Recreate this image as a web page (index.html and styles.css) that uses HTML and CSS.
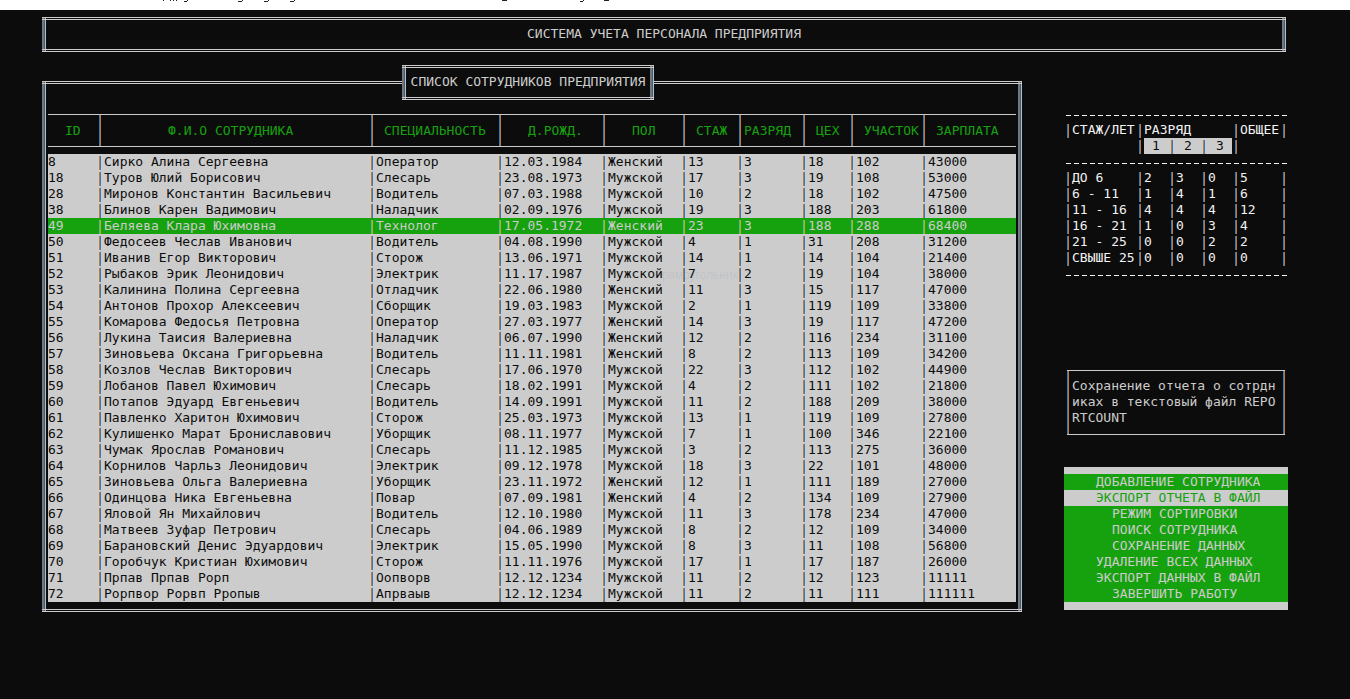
FILE: index.html
```html
<!DOCTYPE html>
<html lang="ru">
<head>
<meta charset="utf-8">
<title>Система учета персонала предприятия</title>
<link rel="stylesheet" href="styles.css">
</head>
<body>
<div class="strip" aria-hidden="true">
  <svg width="640" height="3" viewBox="0 0 640 3" shape-rendering="crispEdges" fill="none" stroke="#222222">
    <path d="M163 0v1M170 0v1M173 0v1M176 0v1M187 0v1M184 1.5h3M242 0v1M238 1.5h4M268 0v1M264 1.5h4M294 0v1M290 1.5h4M502 0.5h5M583 0v1M580 1.5h3M604 0.5h5"/>
  </svg>
</div>
<div class="screen">
  <header class="frame banner"><h1>СИСТЕМА УЧЕТА ПЕРСОНАЛА ПРЕДПРИЯТИЯ</h1></header>
  <div class="columns">
    <main class="frame panel">
      <h2 class="frame panel-title">СПИСОК СОТРУДНИКОВ ПРЕДПРИЯТИЯ</h2>
      <table class="staff">
        <colgroup><col class="c-id"><col class="c-name"><col class="c-job"><col class="c-date"><col class="c-sex"><col class="c-exp"><col class="c-rank"><col class="c-shop"><col class="c-area"><col></colgroup>
        <thead><tr><th class="h-id">ID</th><th class="h-name">Ф.И.О СОТРУДНИКА</th><th>СПЕЦИАЛЬНОСТЬ</th><th class="h-mid">Д.РОЖД.</th><th class="h-mid">ПОЛ</th><th>СТАЖ</th><th class="h-rank">РАЗРЯД</th><th>ЦЕХ</th><th>УЧАСТОК</th><th>ЗАРПЛАТА</th></tr></thead>
        <tbody id="rows"></tbody>
      </table>
      <span class="ghost">Прямоугольник</span>
    </main>
    <aside class="side">
      <table class="stats">
        <colgroup><col class="s-range"><col class="s-n"><col class="s-n"><col class="s-n"><col></colgroup>
        <thead>
          <tr><th>СТАЖ/ЛЕТ</th><th colspan="3">РАЗРЯД</th><th>ОБЩЕЕ</th></tr>
          <tr class="ranks"><th></th><th class="r-first">1</th><th class="r-mid">2</th><th class="r-last">3</th><th></th></tr>
        </thead>
        <tbody>
          <tr><td>ДО 6</td><td>2</td><td>3</td><td>0</td><td>5</td></tr>
          <tr><td>6 - 11</td><td>1</td><td>4</td><td>1</td><td>6</td></tr>
          <tr><td>11 - 16</td><td>4</td><td>4</td><td>4</td><td>12</td></tr>
          <tr><td>16 - 21</td><td>1</td><td>0</td><td>3</td><td>4</td></tr>
          <tr><td>21 - 25</td><td>0</td><td>0</td><td>2</td><td>2</td></tr>
          <tr><td>СВЫШЕ 25</td><td>0</td><td>0</td><td>0</td><td>0</td></tr>
        </tbody>
      </table>
      <p class="hint">Сохранение отчета о сотрдниках в текстовый файл REPORTCOUNT</p>
      <nav class="menu">
        <button type="button">ДОБАВЛЕНИЕ СОТРУДНИКА</button>
        <button type="button" class="active">ЭКСПОРТ ОТЧЕТА В ФАЙЛ</button>
        <button type="button" class="inset">РЕЖИМ СОРТИРОВКИ</button>
        <button type="button" class="inset">ПОИСК СОТРУДНИКА</button>
        <button type="button" class="inset">СОХРАНЕНИЕ ДАННЫХ</button>
        <button type="button">УДАЛЕНИЕ ВСЕХ ДАННЫХ</button>
        <button type="button">ЭКСПОРТ ДАННЫХ В ФАЙЛ</button>
        <button type="button" class="inset">ЗАВЕРШИТЬ РАБОТУ</button>
      </nav>
    </aside>
  </div>
</div>
<script src="staff.js"></script>
</body>
</html>
```

FILE: styles.css
```css
* { box-sizing: border-box; }

:root {
  --ink: #0c0c0c;
  --grey: #cccccc;
  --green: #16a10e;
  --rule-dark: linear-gradient(90deg, #3a78b0 50%, #c07a3a 50%);
  --rule-grey: linear-gradient(90deg, #b0804a 50%, #3a78b8 50%);
  --rule-green: linear-gradient(90deg, #60b890 50%, #b0b030 50%);
  --edge: linear-gradient(90deg, #3a86c8 25%, #a8683a 25% 50%, #1f66a8 50% 75%, #d8b894 75%);
}

body {
  margin: 0;
  min-height: 100vh;
  background: var(--ink);
  color: var(--grey);
  font: 13px/16px "DejaVu Sans Mono", monospace;
}

h1, h2, p { margin: 0; font: inherit; }

.strip { height: 10px; background: #ffffff; }
.strip svg { display: block; }

.screen { padding: 7px 62px 0 42px; }

/* Double-line console frame */
.frame {
  border: 0 double var(--grey);
  border-width: 3px 0;
  background-color: var(--ink);
  background-image: var(--edge), var(--edge);
  background-origin: border-box;
  background-position: 0 0, 100% 0;
  background-size: 4px 100%;
  background-repeat: no-repeat;
}

.banner {
  margin-right: 2px;
  padding: 6px 6px 7px;
  text-align: center;
}

.columns {
  display: flex;
  gap: 42px;
  align-items: flex-start;
  margin-top: 29px;
}

.panel {
  position: relative;
  flex: 1;
  padding: 30px 6px 7px;
}

.panel-title {
  position: absolute;
  top: -19px;
  left: 360px;
  min-width: 252px;
  padding: 6px 6px 7px;
  text-align: center;
  white-space: nowrap;
}

table { width: 100%; border-spacing: 0; table-layout: fixed; }
th, td { padding: 0 0 0 5px; height: 16px; font-weight: normal; text-align: left; white-space: nowrap; }

.c-id { width: 51px; }
.c-name { width: 272px; }
.c-job { width: 128px; }
.c-date { width: 104px; }
.c-sex { width: 80px; }
.c-exp { width: 56px; }
.c-rank { width: 64px; }
.c-shop { width: 48px; }
.c-area { width: 72px; }

.staff th {
  height: 33px;
  padding-left: 13px;
  border: solid var(--grey);
  border-width: 1px 0;
  color: var(--green);
  background: var(--rule-dark) no-repeat 0 0 / 2px 100%;
}
.staff .h-id { padding-left: 17px; background: none; }
.staff .h-name { padding-left: 69px; }
.staff .h-mid { padding-left: 29px; }
.staff .h-rank { padding-left: 5px; }

.staff tbody::before { content: ""; display: table-row; height: 7px; }

.staff td {
  color: var(--ink);
  background: var(--rule-grey) no-repeat 0 2px / 2px 14px, var(--grey);
}
.staff td:first-child { padding-left: 0; background: var(--grey); }
.staff .selected td {
  color: var(--grey);
  background: var(--rule-green) no-repeat 0 2px / 2px 14px, var(--green);
}
.staff .selected td:first-child { background: var(--green); }

.ghost {
  position: absolute;
  left: 611px;
  top: 183px;
  color: rgba(90, 110, 140, 0.12);
  font: 12px/16px "Liberation Sans", sans-serif;
}

.side { flex: 0 0 224px; padding-top: 25px; }

.stats {
  --dash: linear-gradient(90deg, #f2f2f2 5px, transparent 5px);
  padding: 16px 3px;
  color: #f2f2f2;
  background-image: var(--dash), var(--dash), var(--dash);
  background-size: 8px 1px;
  background-repeat: repeat-x;
  background-position: 2px 9px, 2px 57px, 2px 169px;
}
.s-range { width: 72px; }
.s-n { width: 32px; }
.stats tbody::before { content: ""; display: table-row; height: 16px; }
.stats th, .stats td { background: var(--rule-dark) no-repeat 0 2px / 2px 14px; }
.stats tr > :last-child {
  background: var(--rule-dark) no-repeat 0 2px / 2px 14px, var(--rule-dark) no-repeat 100% 2px / 2px 14px;
}
.stats .ranks th { padding-left: 13px; color: var(--ink); }
.stats .ranks th:first-child { background: none; }
.stats .ranks th:last-child { background: var(--rule-dark) no-repeat 0 2px / 2px 14px; }
.stats .ranks .r-first {
  background: var(--rule-dark) no-repeat 0 2px / 2px 14px, linear-gradient(90deg, transparent 5px, var(--grey) 5px);
}
.stats .ranks .r-mid { background: var(--rule-grey) no-repeat 0 2px / 2px 14px, var(--grey); }
.stats .ranks .r-last {
  background: var(--rule-grey) no-repeat 0 2px / 2px 14px, linear-gradient(90deg, var(--grey) 29px, transparent 29px);
}

.hint {
  margin: 88px 3px 0;
  padding: 7px 5px 8px;
  border: solid var(--grey);
  border-width: 1px 0;
  word-break: break-all;
  background: var(--rule-dark) no-repeat 0 0 / 2px 100%, var(--rule-dark) no-repeat 100% 0 / 2px 100%;
}

.menu {
  display: flex;
  flex-direction: column;
  margin-top: 32px;
  padding: 7px 0 8px;
  background: var(--grey);
}
.menu button {
  padding: 0 0 0 32px;
  border: 0;
  background: var(--green);
  color: var(--grey);
  font: inherit;
  text-align: left;
}
.menu .inset { padding-left: 48px; }
.menu .active { background: var(--grey); color: var(--green); }
```

FILE: staff.js
```js
const M = "Мужской";
const W = "Женский";
const selectedId = 49;

const staff = [
  [8, "Сирко Алина Сергеевна", "Оператор", "12.03.1984", W, 13, 3, 18, 102, 43000],
  [18, "Туров Юлий Борисович", "Слесарь", "23.08.1973", M, 17, 3, 19, 108, 53000],
  [28, "Миронов Константин Васильевич", "Водитель", "07.03.1988", M, 10, 2, 18, 102, 47500],
  [38, "Блинов Карен Вадимович", "Наладчик", "02.09.1976", M, 19, 3, 188, 203, 61800],
  [49, "Беляева Клара Юхимовна", "Технолог", "17.05.1972", W, 23, 3, 188, 288, 68400],
  [50, "Федосеев Чеслав Иванович", "Водитель", "04.08.1990", M, 4, 1, 31, 208, 31200],
  [51, "Иванив Егор Викторович", "Сторож", "13.06.1971", M, 14, 1, 14, 104, 21400],
  [52, "Рыбаков Эрик Леонидович", "Электрик", "11.17.1987", M, 7, 2, 19, 104, 38000],
  [53, "Калинина Полина Сергеевна", "Отладчик", "22.06.1980", W, 11, 3, 15, 117, 47000],
  [54, "Антонов Прохор Алексеевич", "Сборщик", "19.03.1983", M, 2, 1, 119, 109, 33800],
  [55, "Комарова Федосья Петровна", "Оператор", "27.03.1977", W, 14, 3, 19, 117, 47200],
  [56, "Лукина Таисия Валериевна", "Наладчик", "06.07.1990", W, 12, 2, 116, 234, 31100],
  [57, "Зиновьева Оксана Григорьевна", "Водитель", "11.11.1981", W, 8, 2, 113, 109, 34200],
  [58, "Козлов Чеслав Викторович", "Слесарь", "17.06.1970", M, 22, 3, 112, 102, 44900],
  [59, "Лобанов Павел Юхимович", "Слесарь", "18.02.1991", M, 4, 2, 111, 102, 21800],
  [60, "Потапов Эдуард Евгеньевич", "Водитель", "14.09.1991", M, 11, 2, 188, 209, 38000],
  [61, "Павленко Харитон Юхимович", "Сторож", "25.03.1973", M, 13, 1, 119, 109, 27800],
  [62, "Кулишенко Марат Брониславович", "Уборщик", "08.11.1977", M, 7, 1, 100, 346, 22100],
  [63, "Чумак Ярослав Романович", "Слесарь", "11.12.1985", M, 3, 2, 113, 275, 36000],
  [64, "Корнилов Чарльз Леонидович", "Электрик", "09.12.1978", M, 18, 3, 22, 101, 48000],
  [65, "Зиновьева Ольга Валериевна", "Уборщик", "23.11.1972", W, 12, 1, 111, 189, 27000],
  [66, "Одинцова Ника Евгеньевна", "Повар", "07.09.1981", W, 4, 2, 134, 109, 27900],
  [67, "Яловой Ян Михайлович", "Водитель", "12.10.1980", M, 11, 3, 178, 234, 47000],
  [68, "Матвеев Зуфар Петрович", "Слесарь", "04.06.1989", M, 8, 2, 12, 109, 34000],
  [69, "Барановский Денис Эдуардович", "Электрик", "15.05.1990", M, 8, 3, 11, 108, 56800],
  [70, "Горобчук Кристиан Юхимович", "Сторож", "11.11.1976", M, 17, 1, 17, 187, 26000],
  [71, "Прпав Прпав Рорп", "Оопворв", "12.12.1234", M, 11, 2, 12, 123, 11111],
  [72, "Рорпвор Рорвп Рропыв", "Апрваыв", "12.12.1234", M, 11, 2, 11, 111, 111111]
];

document.getElementById("rows").innerHTML = staff
  .map(row => `<tr${row[0] === selectedId ? ' class="selected"' : ""}>${row.map(cell => `<td>${cell}</td>`).join("")}</tr>`)
  .join("");
```
